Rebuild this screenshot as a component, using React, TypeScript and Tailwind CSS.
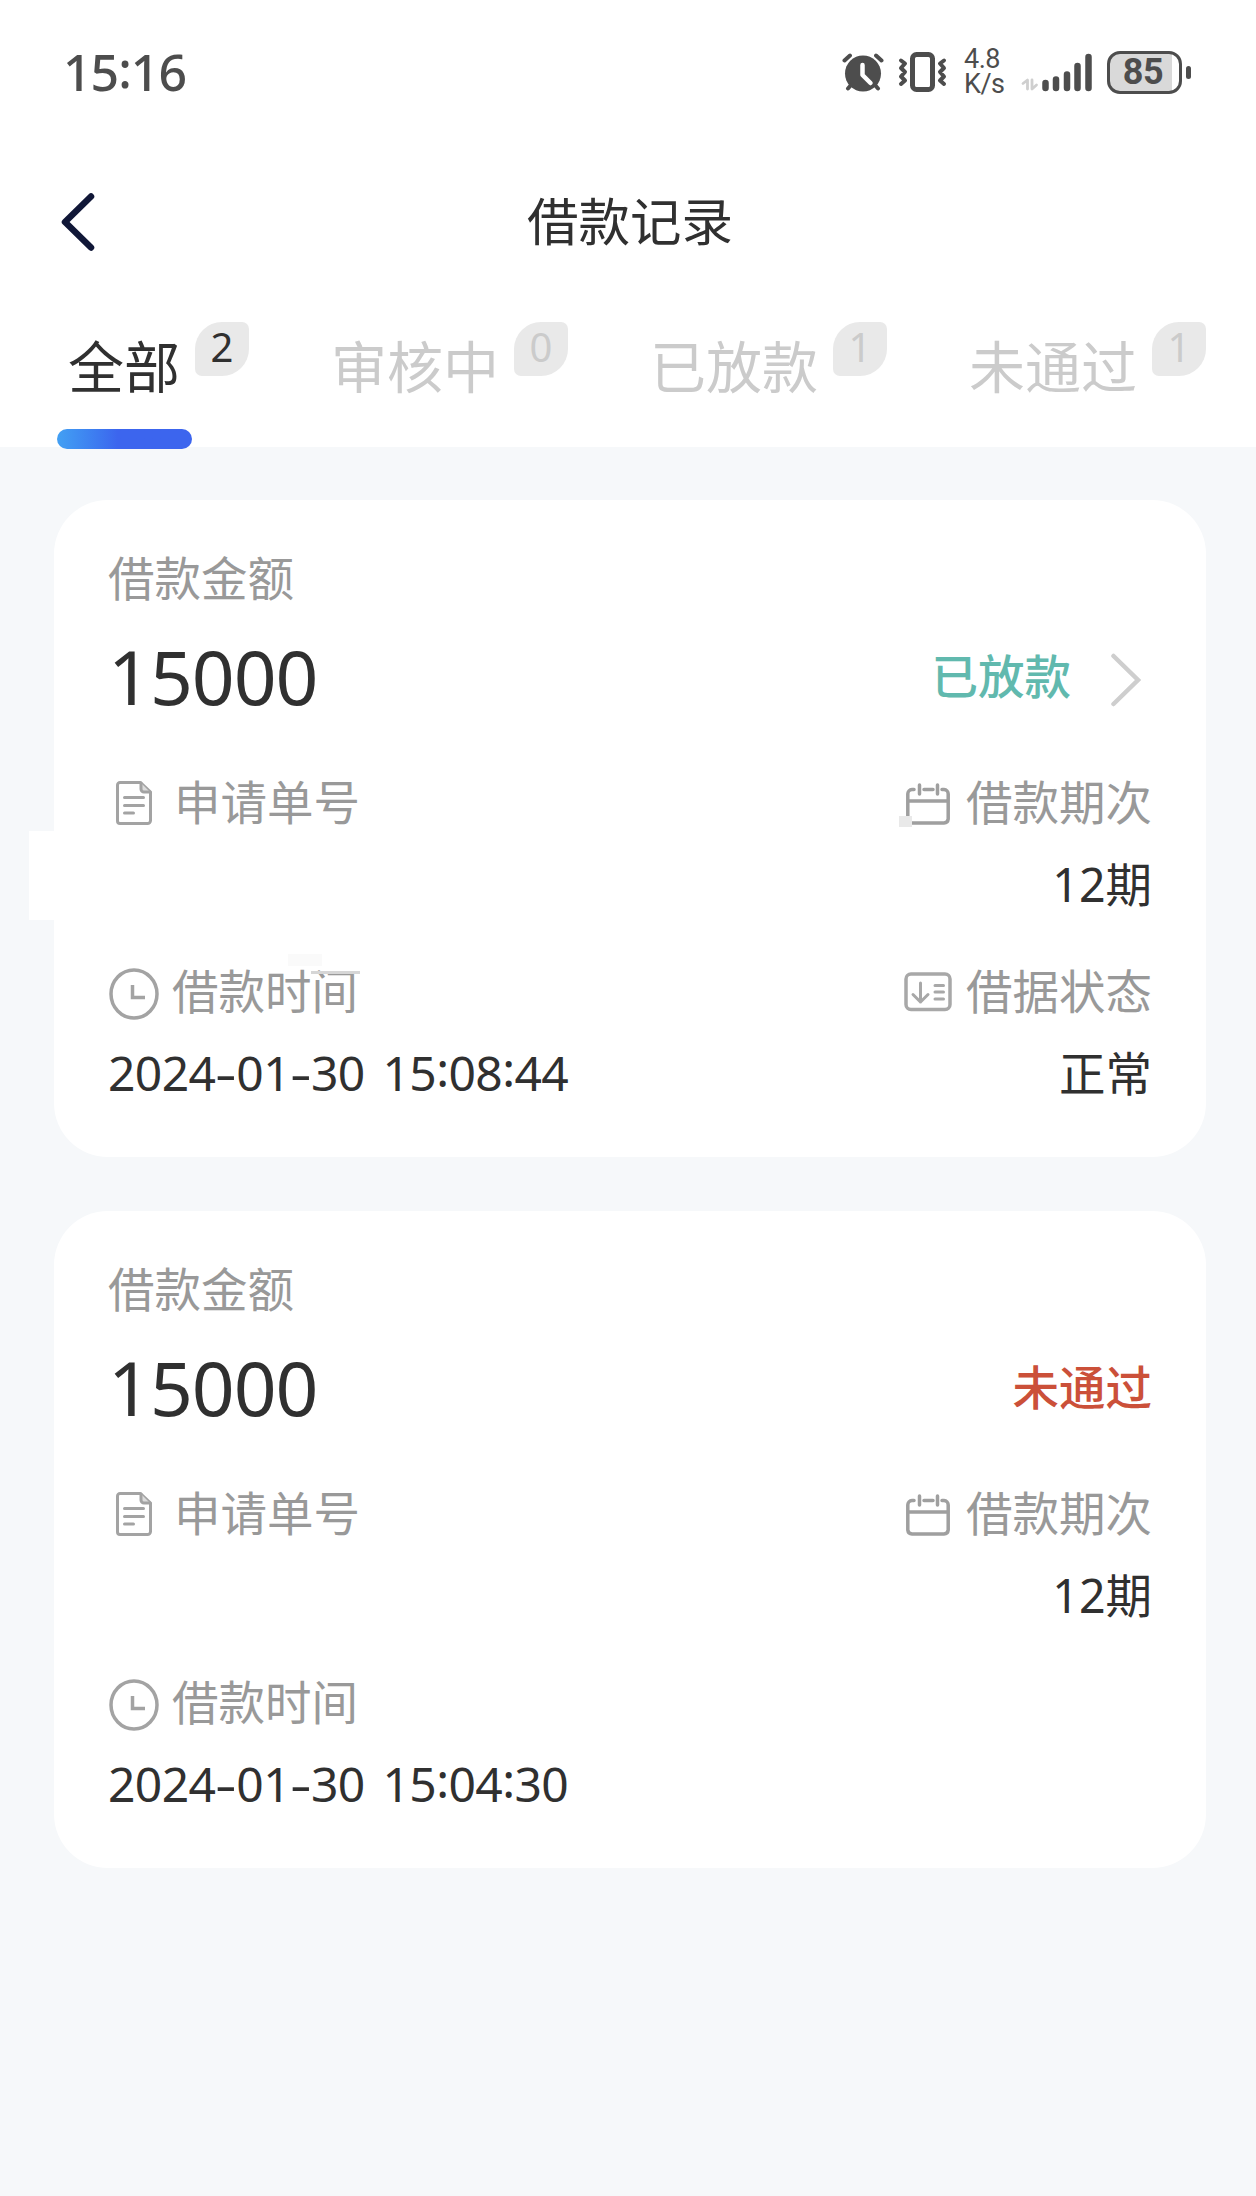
import React from 'react';

type Loan = {
  amount: string;
  status: string;
  statusClass: string;
  clickable: boolean;
  term: string;
  time: string;
  state?: string;
  masked: boolean;
};

const tabs = [
  { label: '全部', count: 2 },
  { label: '审核中', count: 0 },
  { label: '已放款', count: 1 },
  { label: '未通过', count: 1 },
];

const loans: Loan[] = [
  {
    amount: '15000',
    status: '已放款',
    statusClass: 'text-[#61b9ae]',
    clickable: true,
    term: '12期',
    time: '2024-01-30 15:08:44',
    state: '正常',
    masked: true,
  },
  {
    amount: '15000',
    status: '未通过',
    statusClass: 'text-[#cb5039]',
    clickable: false,
    term: '12期',
    time: '2024-01-30 15:04:30',
    masked: false,
  },
];

const AlarmIcon = () => (
  <svg width="42" height="40" viewBox="0 0 42 40" fill="none" stroke="#4d4d4d" strokeLinecap="round">
    <circle cx="21" cy="21.5" r="18" fill="#4d4d4d" stroke="none" />
    <path d="M2.5 8.5l5.500-5M39.500 8.500L34 3.500M9 33L6 36.500M33 33l3 3.500" strokeWidth="4" />
    <path d="M20.5 13v10l8 8" stroke="#fff" strokeWidth="4.5" strokeLinejoin="round" />
  </svg>
);

const VibrateIcon = () => (
  <svg width="50" height="40" viewBox="0 0 50 40" fill="none" stroke="#4d4d4d">
    <rect x="14.5" y="2.5" width="20" height="35" rx="4" strokeWidth="5" />
    <path
      d="M3 8.500l4 3-4 4.500 4 4-4 4.500 4 4-4 3.500M46 8.500l-4 3 4 4.500-4 4 4 4.500-4 4 4 3.500"
      strokeWidth="4"
      strokeLinecap="round"
      strokeLinejoin="round"
    />
  </svg>
);

const SignalIcon = () => (
  <svg width="72" height="40" viewBox="0 0 72 40" fill="none" strokeLinecap="round">
    <path d="M2 31.500l4.500-3.500v9M11 28v9l4.500-4" stroke="#cfcfcf" strokeWidth="2.800" strokeLinejoin="round" />
    <path d="M24.500 31v5M35 27.500V36M46 22.500V36M56.500 14v22M67.500 5v31" stroke="#4d4d4d" strokeWidth="6.500" />
  </svg>
);

const BackIcon = () => (
  <svg width="34" height="58" viewBox="0 0 34 58" fill="none" stroke="#101737" strokeWidth="6.500" strokeLinecap="round" strokeLinejoin="round">
    <path d="M30 3.500L4 29l26 25.500" />
  </svg>
);

const DocIcon = () => (
  <svg width="36" height="44" viewBox="0 0 36 44" fill="none" stroke="#a3a3a3" strokeWidth="3" strokeLinejoin="round" strokeLinecap="round">
    <path d="M4 1.500h20.500L34.500 11v28.500a3 3 0 01-3 3H4a2.500 2.500 0 01-2.500-2.500V4A2.500 2.500 0 014 1.500z" />
    <path d="M25 2v6a3 3 0 003 3h6" fill="#dcdcdc" />
    <path d="M8.500 16.500h19M8.500 24.500h19M8.500 32h9" strokeWidth="3" />
  </svg>
);

const CalendarIcon = () => (
  <svg width="44" height="42" viewBox="0 0 44 42" fill="none" stroke="#9f9f9f" strokeWidth="3.500" strokeLinecap="round">
    <path d="M8 6.500H6A4.500 4.500 0 001.800 11v25A4.500 4.500 0 006 40h32a4.500 4.500 0 004.200-4V11A4.500 4.500 0 0038 6.500h-2M18 6.500h9M1.800 18h40.400" />
    <path d="M13.500 2v9M31.500 2v9" />
  </svg>
);

const ClockIcon = () => (
  <svg width="50" height="52" viewBox="0 0 50 52" fill="none" stroke="#a3a3a3" strokeWidth="3.500">
    <ellipse cx="25" cy="26" rx="23" ry="24" />
    <path d="M23.500 17v12.500H36" />
  </svg>
);

const StateIcon = () => (
  <svg width="48" height="40" viewBox="0 0 48 40" fill="none" stroke="#a8a8a8" strokeWidth="3" strokeLinecap="round" strokeLinejoin="round">
    <rect x="2" y="2" width="44" height="35.500" rx="5" strokeWidth="3.500" />
    <path d="M16.500 11v19M9 22.500l7.500 7.500 7.500-7.500M31 13.500h8.500M31 20h8.500M31 27h8.500" />
  </svg>
);

const ChevronIcon = () => (
  <svg width="30" height="54" viewBox="0 0 30 54" fill="none" stroke="#cecece" strokeWidth="4.500" strokeLinecap="round">
    <path d="M2.500 3L27 27 2.500 51" />
  </svg>
);

const StatusBar = () => (
  <div className="flex h-[144px] items-center justify-between pl-[63px] pr-[65px] text-[#4d4d4d]">
    <span className="text-[50px] font-medium leading-[60px] tracking-[-1px]">
      15<span className="inline-block -translate-y-[3px]">:</span>16
    </span>
    <div className="flex items-center">
      <AlarmIcon />
      <span className="ml-[14px]"><VibrateIcon /></span>
      <div className="ml-[16px] w-[42px] font-[Roboto] text-[27px] leading-[25px] tracking-[-0.5px]">
        <div>4.8</div>
        <div>K/s</div>
      </div>
      <span className="ml-[15px]"><SignalIcon /></span>
      <div className="ml-[14px] flex h-[43px] w-[75px] items-center justify-center rounded-[13px] border-[3px] border-[#4d4d4d] bg-linear-to-r from-[#d9d9d9] from-90% to-white to-90% pr-[3px] font-[Roboto] text-[36px] font-bold leading-none tracking-[-0.5px]">
        85
      </div>
      <div className="ml-[4px] h-[13px] w-[5px] rounded-full bg-[#4d4d4d]" />
    </div>
  </div>
);

const Label = ({ icon, text }: { icon: React.ReactNode; text: string }) => (
  <div className="flex h-[60px] items-center text-[#999]">
    {icon}
    <span className="-mt-[2px]">{text}</span>
  </div>
);

// dashes are widened and colons sit at mid-height
const DateTime = ({ value }: { value: string }) => (
  <span className="whitespace-pre text-[48px] tracking-[-0.6px] [word-spacing:6px]">
    {value.split(/([-:])/).map((part, i) => {
      if (part === '-') return <span key={i} className="mx-[3px] inline-block scale-x-140">-</span>;
      if (part === ':') return <span key={i} className="inline-block -translate-y-[4px]">:</span>;
      return part;
    })}
  </span>
);

const LoanCard = ({ loan }: { loan: Loan }) => (
  <section className="relative h-[657px] rounded-[54px] bg-white px-[54px] pt-[48px] text-[46.500px] leading-[60px] text-[#303030]">
    {loan.masked && (
      <>
        <div className="absolute -left-[25px] top-[331px] h-[89px] w-[60px] bg-white" />
        <div className="absolute left-[845px] top-[316px] h-[11px] w-[13px] bg-[#e9e9e9]" />
        <div className="absolute left-[234px] top-[454px] h-[12px] w-[34px] bg-[#fafafa]" />
        <div className="absolute left-[257px] top-[471px] h-[3px] w-[49px] bg-[#d6d6d6]" />
      </>
    )}

    <div className="text-[#999]">借款金额</div>
    <div className="mt-[18px] flex h-[100px] items-center justify-between">
      <span className="text-[75px] leading-[100px] tracking-[-1px]">{loan.amount}</span>
      <div className="flex items-center">
        <span className={`font-medium ${loan.statusClass}`}>{loan.status}</span>
        {loan.clickable && <span className="ml-[40px] mr-[11px] mt-[8px]"><ChevronIcon /></span>}
      </div>
    </div>

    <div className="mt-[47px] flex justify-between">
      <Label icon={<span className="ml-[8px] mr-[22px]"><DocIcon /></span>} text="申请单号" />
      <Label icon={<span className="mr-[16px] mt-[1px]"><CalendarIcon /></span>} text="借款期次" />
    </div>
    <div className="mt-[21px] h-[60px] text-right">{loan.term}</div>

    <div className="mt-[48px] flex justify-between">
      <Label icon={<span className="ml-[1px] mr-[13px] mt-[4px]"><ClockIcon /></span>} text="借款时间" />
      {loan.state && <Label icon={<span className="mr-[14px]"><StateIcon /></span>} text="借据状态" />}
    </div>
    <div className="mt-[21px] flex h-[60px] justify-between">
      <DateTime value={loan.time} />
      <span>{loan.state}</span>
    </div>
  </section>
);

const App: React.FC = () => {
  return (
    <div className="flex h-[2196px] w-[1256px] flex-col bg-[#f6f8fa] font-['Noto_Sans','Noto_Sans_CJK_SC',sans-serif]">
      <header className="h-[447px] bg-white">
        <StatusBar />
        <div className="grid h-[156px] grid-cols-[200px_1fr_196px] items-center">
          <span className="pl-[61px]"><BackIcon /></span>
          <h1 className="-mt-[2px] text-center text-[51.500px] leading-[70px] text-[#303030]">借款记录</h1>
        </div>
        <nav className="flex pl-[68px]">
          {tabs.map((tab, i) => (
            <div key={tab.label} className={`flex shrink-0 ${i === 0 ? 'w-[263px] text-[#303030]' : 'w-[319px] text-[#cbcbcb]'}`}>
              <div className="relative pt-[31px]">
                <span className="block whitespace-nowrap text-[56px] leading-[70px]">{tab.label}</span>
                {i === 0 && (
                  <div className="absolute -left-[11px] top-[129px] h-[20px] w-[135px] rounded-full bg-linear-to-r from-[#43a0f3] to-[#3c65ee] to-45%" />
                )}
              </div>
              <span className="ml-[15px] mt-[22px] flex h-[54px] w-[54px] items-center justify-center rounded-bl-[7px] rounded-br-[27px] rounded-tl-[27px] rounded-tr-[7px] bg-[#e9e9e9] pb-[4px] text-[40px] leading-none">
                {tab.count}
              </span>
            </div>
          ))}
        </nav>
      </header>
      <main className="flex flex-col gap-[54px] pl-[54px] pr-[50px] pt-[53px]">
        {loans.map((loan) => (
          <LoanCard key={loan.time} loan={loan} />
        ))}
      </main>
    </div>
  );
};

export default App;
